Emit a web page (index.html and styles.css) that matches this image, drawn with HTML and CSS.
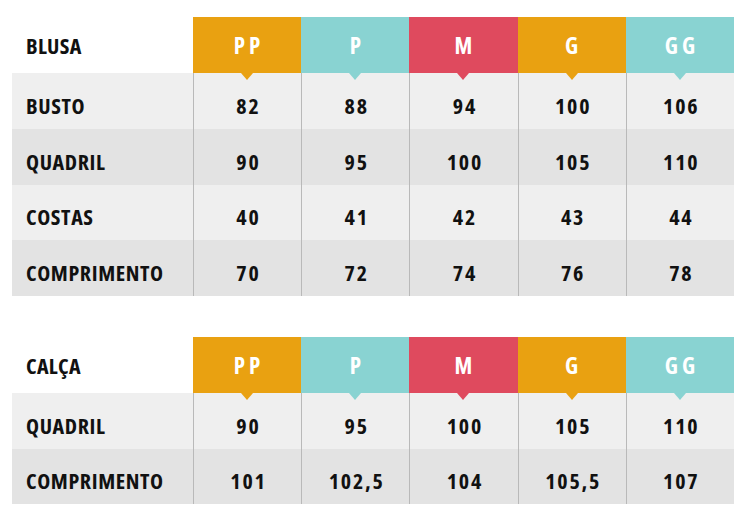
FILE: index.html
```html
<!DOCTYPE html>
<html lang="pt">
<head>
<meta charset="utf-8">
<link rel="stylesheet" href="styles.css">
</head>
<body>
<div class="page">
  <div class="chart">
    <div class="row head">
      <div class="label">BLUSA</div>
      <div class="size orange">PP</div>
      <div class="size teal">P</div>
      <div class="size red">M</div>
      <div class="size orange">G</div>
      <div class="size teal">GG</div>
    </div>
    <div class="row light">
      <div class="label">BUSTO</div>
      <div class="val">82</div><div class="val">88</div><div class="val">94</div><div class="val">100</div><div class="val">106</div>
    </div>
    <div class="row dark">
      <div class="label">QUADRIL</div>
      <div class="val">90</div><div class="val">95</div><div class="val">100</div><div class="val">105</div><div class="val">110</div>
    </div>
    <div class="row light short">
      <div class="label">COSTAS</div>
      <div class="val">40</div><div class="val">41</div><div class="val">42</div><div class="val">43</div><div class="val">44</div>
    </div>
    <div class="row dark">
      <div class="label">COMPRIMENTO</div>
      <div class="val">70</div><div class="val">72</div><div class="val">74</div><div class="val">76</div><div class="val">78</div>
    </div>
  </div>

  <div class="chart">
    <div class="row head">
      <div class="label">CALÇA</div>
      <div class="size orange">PP</div>
      <div class="size teal">P</div>
      <div class="size red">M</div>
      <div class="size orange">G</div>
      <div class="size teal">GG</div>
    </div>
    <div class="row light">
      <div class="label">QUADRIL</div>
      <div class="val">90</div><div class="val">95</div><div class="val">100</div><div class="val">105</div><div class="val">110</div>
    </div>
    <div class="row dark short">
      <div class="label">COMPRIMENTO</div>
      <div class="val">101</div><div class="val">102,5</div><div class="val">104</div><div class="val">105,5</div><div class="val">107</div>
    </div>
  </div>
</div>
</body>
</html>
```
FILE: styles.css
```css
* { box-sizing: border-box; }
html, body { margin: 0; padding: 0; background: #fff; }
body {
  font-family: "Open Sans", "Roboto Condensed", "DejaVu Sans Condensed", sans-serif;
  font-stretch: 75%;
  font-weight: 700;
  color: #111;
}
.page {
  padding: 17px 0 0 12px;
  display: flex;
  flex-direction: column;
  gap: 41px;
  width: 734px;
}
.row {
  display: grid;
  grid-template-columns: 181px repeat(5, 1fr);
  height: 56px;
  padding-top: 7px;
}
.row.short { height: 55px; }
.row.head { padding-top: 0; }
.light { background: #efefef; }
.dark { background: #e3e3e3; }
.label {
  display: flex;
  align-items: center;
  padding-left: 14px;
  font-size: 22px;
  line-height: 1;
  letter-spacing: 0.6px;
}
.head .label { letter-spacing: 0.3px; }
.size {
  position: relative;
  display: flex;
  align-items: center;
  justify-content: center;
  color: #fff;
  font-size: 23px;
  line-height: 1;
  letter-spacing: 4px;
  padding-left: 4px;
}
.size::after {
  content: "";
  position: absolute;
  left: 50%;
  bottom: -7px;
  margin-left: -6px;
  border-left: 6px solid transparent;
  border-right: 6px solid transparent;
  border-top: 7px solid var(--c);
  z-index: 2;
}
.orange { background: #e9a111; --c: #e9a111; }
.teal { background: #89d3d2; --c: #89d3d2; }
.red { background: #df4a5e; --c: #df4a5e; }
.val {
  display: flex;
  align-items: center;
  justify-content: center;
  margin-top: -7px;
  padding-top: 7px;
  border-left: 1px solid #b9b9b9;
  font-size: 22px;
  line-height: 1;
  letter-spacing: 1.8px;
  padding-left: 1.8px;
}
```
